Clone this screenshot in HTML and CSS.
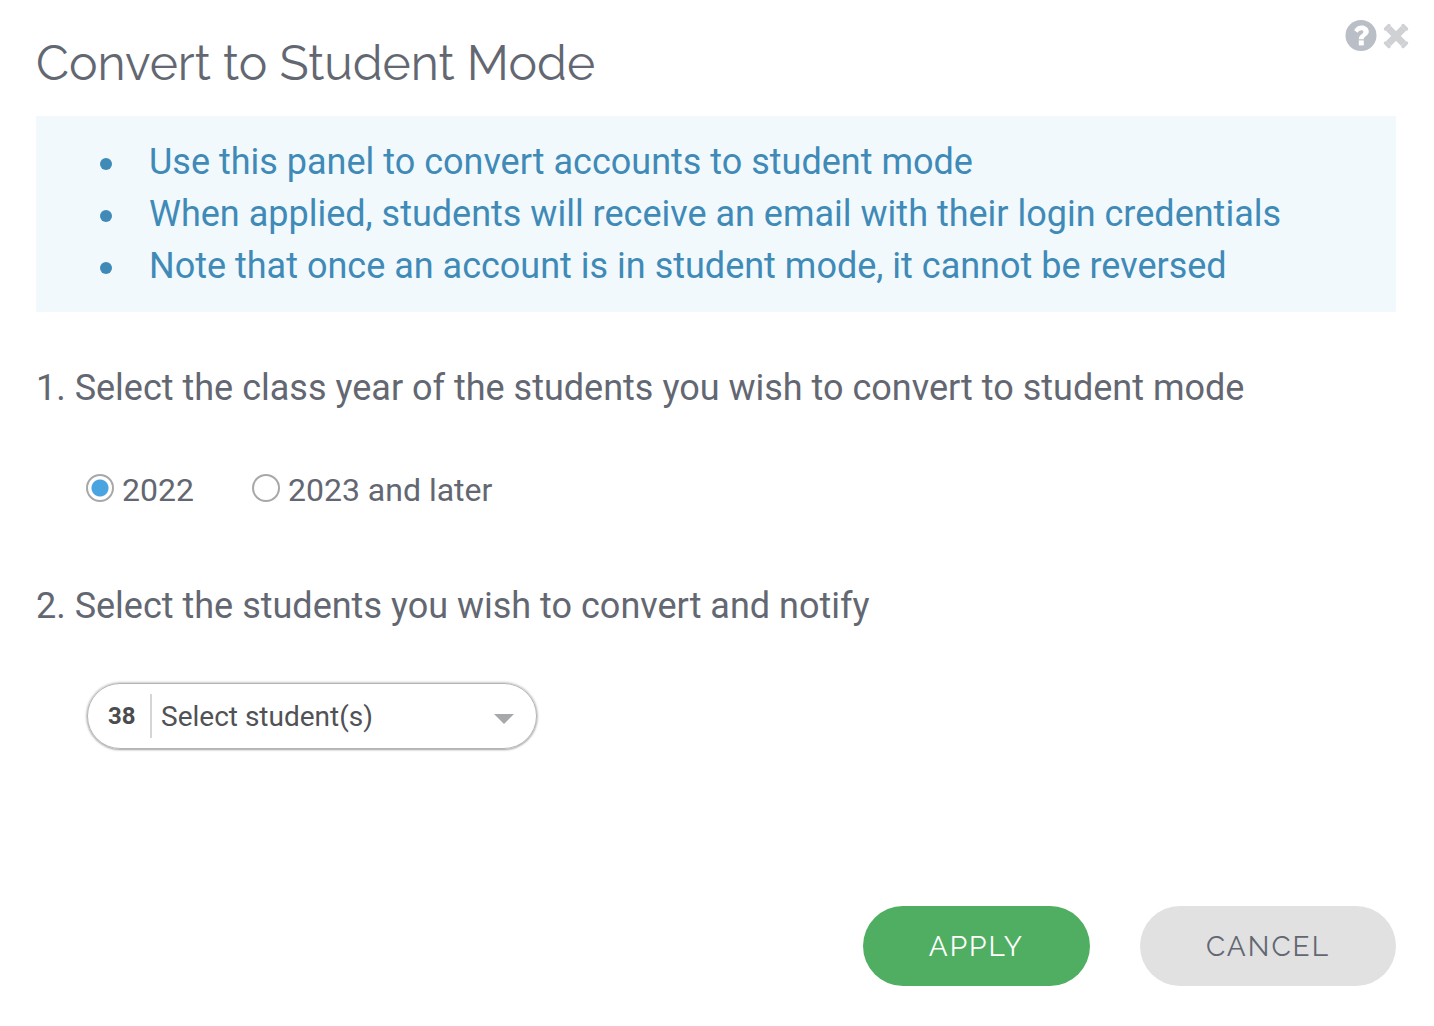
FILE: index.html
```html
<!DOCTYPE html>
<html lang="en">

<head>
	<meta charset="UTF-8">
	<meta name="viewport" content="width=device-width, initial-scale=1.0">
	<title>Convert to Student Mode</title>
	<link rel="stylesheet" href="styles.css">
</head>

<body>
	<form class="panel">
		<header class="panel-header">
			<h1>Convert to Student Mode</h1>
			<div class="panel-tools">
				<button type="button" class="tool" aria-label="Help">
					<svg width="32" height="32" viewBox="0 0 32 32">
						<circle cx="16" cy="15.500" r="15.500" fill="#b9bec7"/>
						<path d="M9.200 10.200C11 6.800 13.500 5.600 16.600 5.600C20.600 5.600 23.800 8.200 23.800 11.600C23.800 16 18.800 16.200 18.800 19.200H13.800C13.600 14.600 18.400 14.400 18.400 12C18.400 9.600 14.600 9.800 12.700 12.800Z" fill="#fff"/>
						<rect x="13.800" y="20.400" width="5" height="5" fill="#fff"/>
					</svg>
				</button>
				<button type="button" class="tool" aria-label="Close">
					<svg width="26" height="26" viewBox="0 0 26 26">
						<path d="M5.400 5.400L20.600 20.600M20.600 5.400L5.400 20.600" stroke="#cfd1d5" stroke-width="7"/>
						<path d="M6 2.500L2.500 6M20 2.500L23.500 6M6 23.500L2.500 20M20 23.500L23.500 20" stroke="#cfd1d5" stroke-width="3.500" stroke-linecap="round"/>
					</svg>
				</button>
			</div>
		</header>

		<ul class="notes">
			<li>Use this panel to convert accounts to student mode</li>
			<li>When applied, students will receive an email with their login credentials</li>
			<li>Note that once an account is in student mode, it cannot be reversed</li>
		</ul>

		<h2 id="year-title">1. Select the class year of the students you wish to convert to student mode</h2>
		<div class="years" role="radiogroup" aria-labelledby="year-title">
			<label><input type="radio" name="year" value="2022" checked>2022</label>
			<label><input type="radio" name="year" value="2023">2023 and later</label>
		</div>

		<h2 id="students-title">2. Select the students you wish to convert and notify</h2>
		<div class="students">
			<span class="count">38</span>
			<select aria-labelledby="students-title">
				<option>Select student(s)</option>
			</select>
			<svg class="arrow" width="20" height="10" viewBox="0 0 20 10">
				<path d="M0 0H20L10 10Z" fill="#a6a8aa"/>
			</svg>
		</div>

		<footer class="actions">
			<button type="submit" class="btn btn-apply">APPLY</button>
			<button type="button" class="btn btn-cancel">CANCEL</button>
		</footer>
	</form>
</body>

</html>
```
FILE: styles.css
```css
* {
	box-sizing: border-box;
}

body {
	margin: 0;
	background: #fff;
	color: #636772;
	font-family: Roboto, sans-serif;
}

button,
select {
	border: 0;
	background: none;
	font-family: inherit;
}

.panel {
	display: flex;
	flex-direction: column;
	min-height: 100vh;
	padding: 20px 38px 40px 36px;
}

.panel-header {
	display: flex;
	justify-content: space-between;
	align-items: flex-start;
	margin-right: -13px;
}

h1 {
	margin: 15px 0 25px;
	font-family: Raleway, Lato, sans-serif;
	font-size: 48px;
	font-weight: 400;
	line-height: 56px;
}

.panel-tools {
	display: flex;
	align-items: center;
	gap: 6px;
}

.tool {
	display: flex;
	padding: 0;
	cursor: pointer;
}

.notes {
	margin: 0 0 48px;
	padding: 20px 20px 20px 64px;
	background: #f1f9fd;
	color: #3f8ab7;
	font-size: 36px;
	line-height: 52px;
	list-style: none;
}

.notes li {
	display: flex;
}

.notes li::before {
	content: "";
	flex: none;
	width: 12px;
	height: 12px;
	margin: 22px 37px 0 0;
	border-radius: 50%;
	background: currentColor;
}

h2 {
	margin: 0;
	font-size: 36px;
	font-weight: 400;
	line-height: 56px;
}

.years {
	display: flex;
	gap: 58px;
	margin: 54px 0 68px;
	padding-left: 50px;
}

.years label {
	display: flex;
	align-items: center;
	font-size: 32px;
	line-height: 40px;
}

.years input {
	appearance: none;
	width: 28px;
	height: 28px;
	margin: 0 8px 4px 0;
	border: 2px solid #a8a8a8;
	border-radius: 50%;
}

.years input:checked {
	background: radial-gradient(circle, #49a4e0 8px, #fff 9px);
}

.students {
	display: flex;
	align-items: center;
	align-self: flex-start;
	position: relative;
	width: 450px;
	height: 66px;
	margin: 49px 0 48px 51px;
	border: 1px solid #b4b4b4;
	border-radius: 33px;
	box-shadow: 0 0 3px rgba(0, 0, 0, 0.4), 0 1px 2px rgba(0, 0, 0, 0.2);
}

.count {
	width: 64px;
	padding-left: 20px;
	border-right: 2px solid #d5d5d5;
	color: #4a4c50;
	font-size: 24px;
	font-weight: 700;
	line-height: 44px;
}

.students select {
	appearance: none;
	flex: 1;
	height: 100%;
	padding: 0 60px 0 9px;
	color: #505256;
	font-size: 28px;
}

.arrow {
	position: absolute;
	top: 30px;
	right: 22px;
	pointer-events: none;
}

.actions {
	display: flex;
	justify-content: flex-end;
	gap: 50px;
	margin-top: auto;
}

.btn {
	height: 80px;
	padding: 0 66px;
	border-radius: 40px;
	font-family: Raleway, Lato, sans-serif;
	font-size: 28px;
	letter-spacing: 2px;
	cursor: pointer;
}

.btn-apply {
	background: #4fae62;
	color: #fff;
}

.btn-cancel {
	background: #e1e1e1;
	color: #636772;
}
```
